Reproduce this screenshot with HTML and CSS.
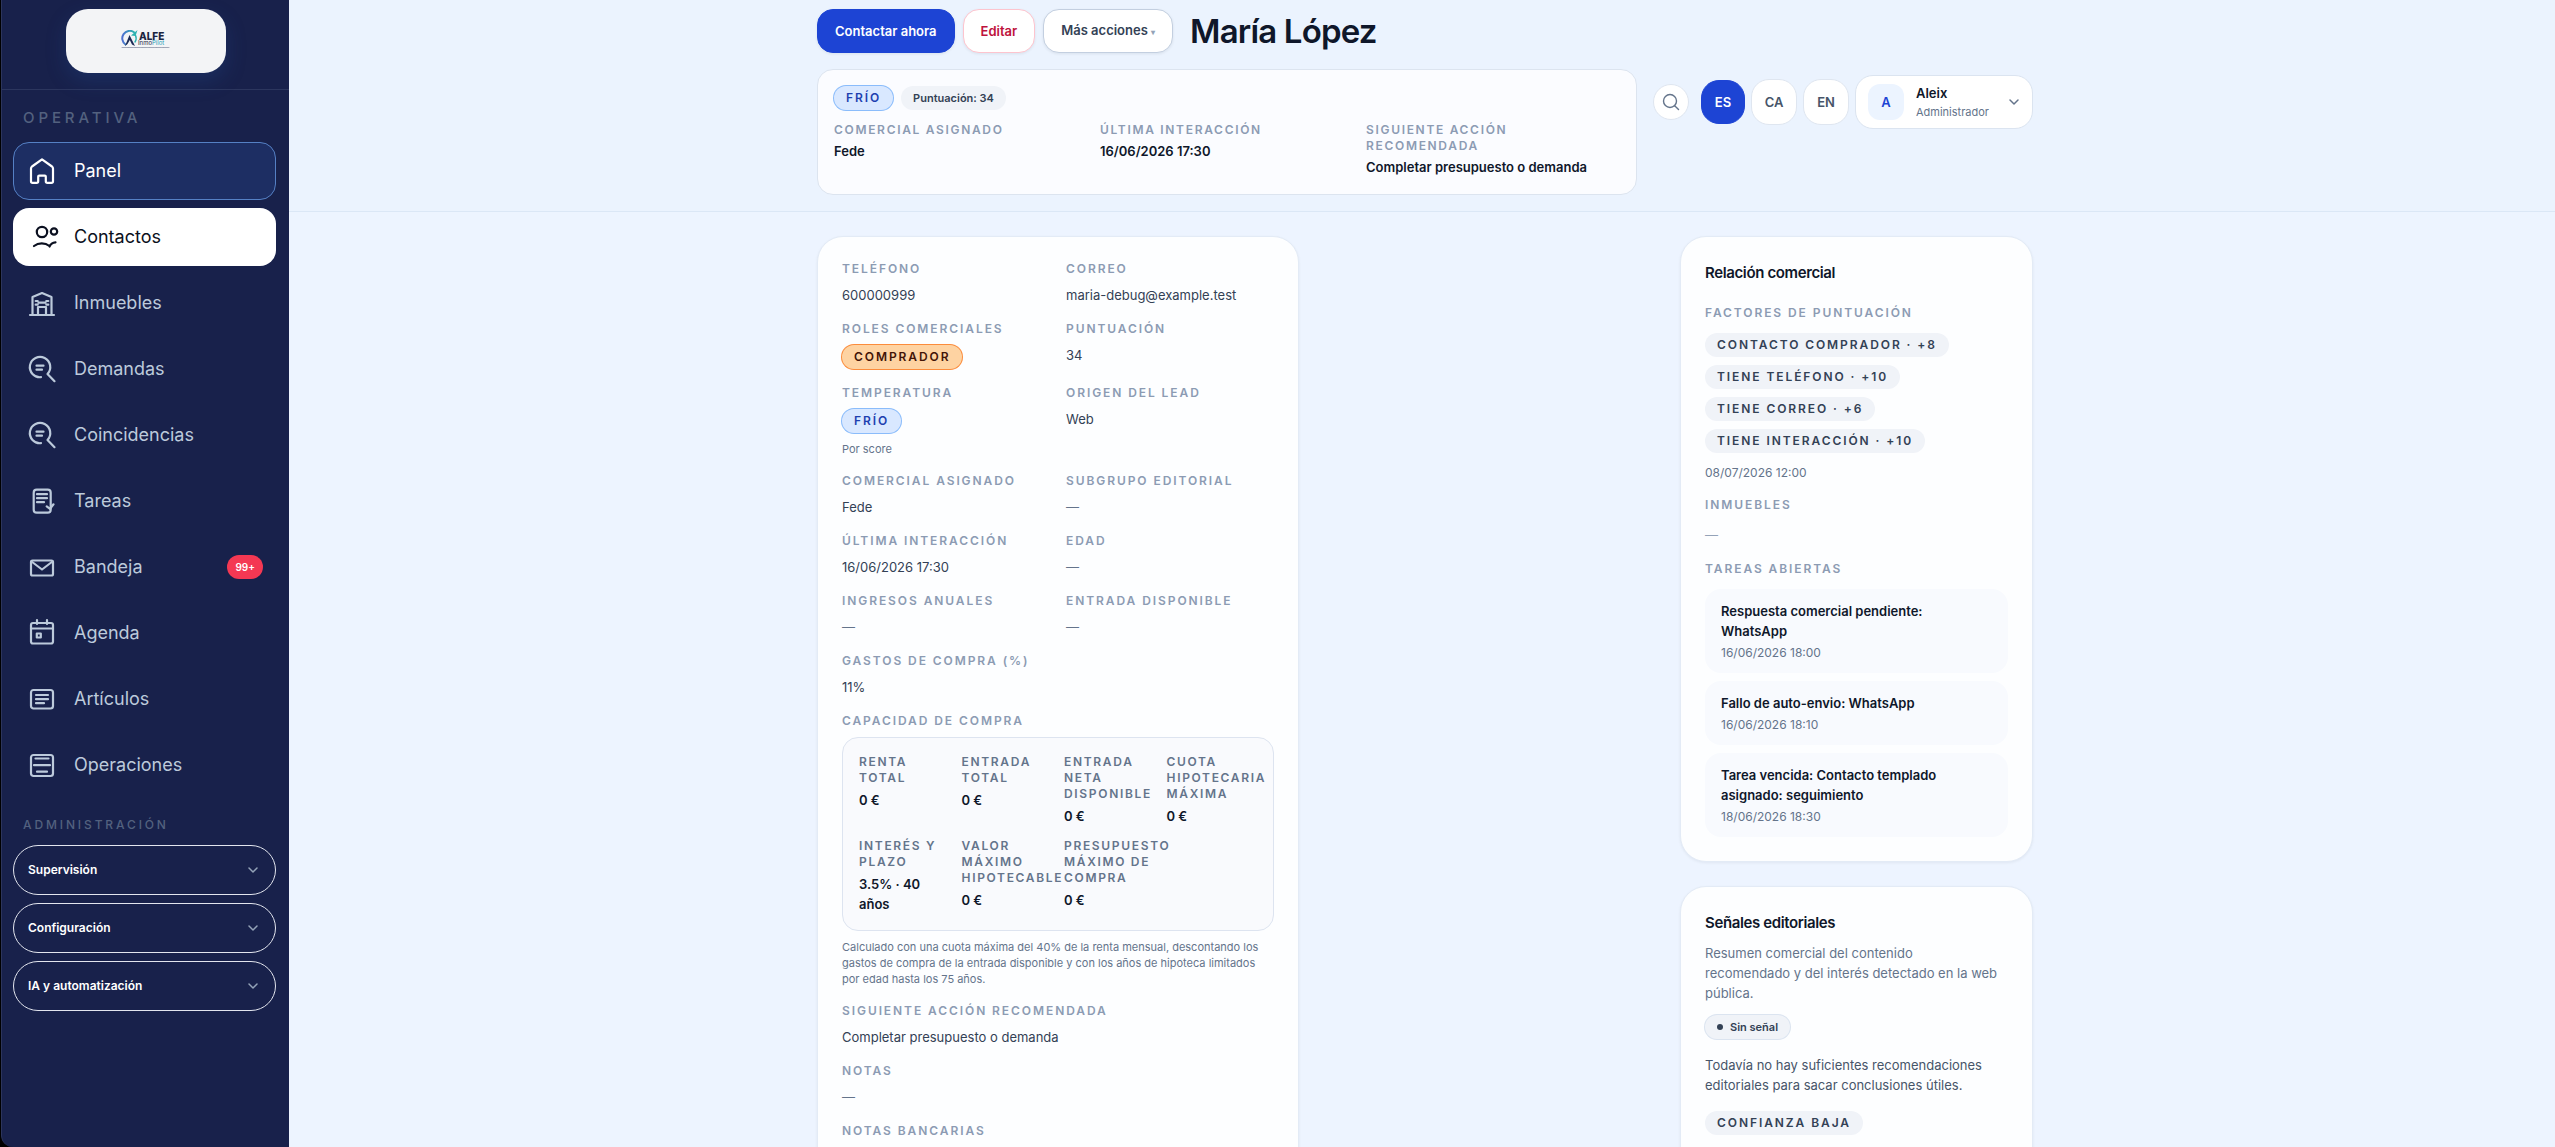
FILE: index.html
```html
<!DOCTYPE html>
<html lang="es">
<head>
    <meta charset="UTF-8">
    <meta name="viewport" content="width=device-width, initial-scale=1.0">
    <title>María López - Contactos</title>
    <link rel="stylesheet" href="styles.css">
</head>
<body>

<div class="app">
    <aside class="sidebar">
        <div class="brand">
            <a class="brand-box" href="#" aria-label="ALFE InmoPilot">
                <svg class="brand-logo" width="50" height="22" viewBox="0 0 50 22">
                    <defs>
                        <linearGradient id="ring" x1="0" y1="0" x2="1" y2="0">
                            <stop offset="0" stop-color="#4f6fd0"/>
                            <stop offset="1" stop-color="#2bb3b0"/>
                        </linearGradient>
                    </defs>
                    <path d="M4.5 14.5A7 7 0 1 1 13 2.2" fill="none" stroke="url(#ring)" stroke-width="2"/>
                    <path d="M14.6 5.5A7 7 0 0 1 14 12" fill="none" stroke="#2bb3b0" stroke-width="1.4"/>
                    <path d="M10 5.5 16.5 0 14.5 6z" fill="#2bb3b0"/>
                    <path d="M4 16 8.5 5 14 16 11 14.5 8.8 10 6.5 14z" fill="#1b2a55"/>
                    <text class="logo-name" x="18" y="9.5">ALFE</text>
                    <text class="logo-sub" x="17" y="15">Inmo<tspan class="logo-teal">Pilot</tspan></text>
                    <path d="M1 17.5h47" stroke="#8b93a7" stroke-width=".8" stroke-dasharray="4 .6 2 .4"/>
                </svg>
            </a>
        </div>

        <p class="nav-heading">Operativa</p>
        <nav class="nav">
            <a class="nav-item nav-item-home" href="#">
                <svg class="nav-icon" viewBox="0 0 28 28"><path d="M3 11.5c0-.8.4-1.5 1-2L14 2.3l10 7.2c.6.5 1 1.2 1 2v12.7c0 .9-.7 1.6-1.6 1.6h-4c-.9 0-1.6-.7-1.6-1.6v-4.6a1 1 0 0 0-1-1h-5.600a1 1 0 0 0-1 1v4.600c0 .9-.7 1.600-1.600 1.600h-4C3.700 25.800 3 25.100 3 24.200z"/></svg>
                <span>Panel</span>
            </a>
            <a class="nav-item nav-item-active" href="#" aria-current="page">
                <svg class="nav-icon" viewBox="0 0 28 28"><circle cx="14" cy="9" r="5.2"/><circle cx="26" cy="8.5" r="3.2"/><path d="M6 23c4.5-3.5 11-3.5 15.5 0M21.5 23.5c1-2.5 3-4 6-4.2"/></svg>
                <span>Contactos</span>
            </a>
            <a class="nav-item" href="#">
                <svg class="nav-icon" viewBox="0 0 28 28"><path d="M2 26h24M4.5 26V8L14 4l9.5 4v18M10 26v-8h8v8M10.5 13.7h7M7.7 12h2M7.7 15.7h2M18.3 12h2M18.3 15.7h2"/></svg>
                <span>Inmuebles</span>
            </a>
            <a class="nav-item" href="#">
                <svg class="nav-icon" viewBox="0 0 28 28"><path d="M13 22.2A10.2 10.2 0 1 1 19.5 19L26.5 26.2M8.5 10.7h7M8.5 14.7h5.5"/></svg>
                <span>Demandas</span>
            </a>
            <a class="nav-item" href="#">
                <svg class="nav-icon" viewBox="0 0 28 28"><path d="M13 22.2A10.2 10.2 0 1 1 19.5 19L26.5 26.2M8.5 10.7h7M8.5 14.7h5.5"/></svg>
                <span>Coincidencias</span>
            </a>
            <a class="nav-item" href="#">
                <svg class="nav-icon" viewBox="0 0 28 28"><rect x="5.7" y="2.7" width="17" height="23" rx="3"/><path d="M9 7.2h10M9 11.2h10M9 15.2h7M18.7 19.3l3.3 2.5 3.5-4.5"/></svg>
                <span>Tareas</span>
            </a>
            <a class="nav-item" href="#">
                <svg class="nav-icon" viewBox="0 0 28 28"><rect x="3" y="7.5" width="22" height="15" rx="1.5"/><path d="M3.5 8.5 14 16.5 24.5 8.5"/></svg>
                <span>Bandeja</span>
                <span class="nav-count">99+</span>
            </a>
            <a class="nav-item" href="#">
                <svg class="nav-icon" viewBox="0 0 28 28"><rect x="3" y="4" width="22" height="20.5" rx="2"/><path d="M3 9.5h22M9 1v4M19 1v4"/><rect x="8.8" y="14.5" width="4" height="4"/></svg>
                <span>Agenda</span>
            </a>
            <a class="nav-item" href="#">
                <svg class="nav-icon" viewBox="0 0 28 28"><rect x="3" y="5" width="22" height="18.5" rx="2.5"/><path d="M8 10h12M8 14.2h12M8 18.2h8"/></svg>
                <span>Artículos</span>
            </a>
            <a class="nav-item" href="#">
                <svg class="nav-icon" viewBox="0 0 28 28"><rect x="3" y="4" width="22" height="21" rx="2.5"/><path d="M7.5 7.5h13M6 14.2h16M9 20.7h10"/></svg>
                <span>Operaciones</span>
            </a>
        </nav>

        <p class="nav-heading nav-heading-small">Administración</p>
        <div class="nav">
            <button class="nav-group" type="button">Supervisión <svg class="chevron" viewBox="0 0 12 12"><path d="M2 4l4 4 4-4"/></svg></button>
            <button class="nav-group" type="button">Configuración <svg class="chevron" viewBox="0 0 12 12"><path d="M2 4l4 4 4-4"/></svg></button>
            <button class="nav-group" type="button">IA y automatización <svg class="chevron" viewBox="0 0 12 12"><path d="M2 4l4 4 4-4"/></svg></button>
        </div>
    </aside>

    <div class="main">
        <header class="header">
            <div class="container">
                <div class="title-row">
                    <div class="actions">
                        <button class="btn btn-primary" type="button">Contactar ahora</button>
                        <button class="btn btn-danger" type="button">Editar</button>
                        <button class="btn" type="button">Más acciones <span class="caret">▾</span></button>
                    </div>
                    <h1>María López</h1>
                </div>

                <div class="header-row">
                    <section class="summary">
                        <div class="summary-badges">
                            <span class="badge badge-blue">Frío</span>
                            <span class="score">Puntuación: 34</span>
                        </div>
                        <dl class="summary-grid">
                            <div>
                                <dt class="label">Comercial asignado</dt>
                                <dd>Fede</dd>
                            </div>
                            <div>
                                <dt class="label">Última interacción</dt>
                                <dd>16/06/2026 17:30</dd>
                            </div>
                            <div>
                                <dt class="label">Siguiente acción recomendada</dt>
                                <dd>Completar presupuesto o demanda</dd>
                            </div>
                        </dl>
                    </section>

                    <div class="tools">
                        <button class="search" type="button" aria-label="Buscar">
                            <svg viewBox="0 0 18 18"><circle cx="8" cy="8" r="6.5"/><path d="M12.7 12.7 16.5 16.5"/></svg>
                        </button>
                        <div class="langs">
                            <button class="lang lang-active" type="button">ES</button>
                            <button class="lang" type="button">CA</button>
                            <button class="lang" type="button">EN</button>
                            <button class="user" type="button">
                                <span class="avatar">A</span>
                                <span class="user-text">
                                    <strong>Aleix</strong>
                                    <small>Administrador</small>
                                </span>
                                <svg class="chevron" viewBox="0 0 12 12"><path d="M2 4l4 4 4-4"/></svg>
                            </button>
                        </div>
                    </div>
                </div>
            </div>
        </header>

        <main class="container columns">
            <section class="card">
                <dl class="details">
                    <div>
                        <dt class="label">Teléfono</dt>
                        <dd>600000999</dd>
                    </div>
                    <div>
                        <dt class="label">Correo</dt>
                        <dd>maria-debug@example.test</dd>
                    </div>
                    <div>
                        <dt class="label">Roles comerciales</dt>
                        <dd><span class="badge badge-orange">Comprador</span></dd>
                    </div>
                    <div>
                        <dt class="label">Puntuación</dt>
                        <dd>34</dd>
                    </div>
                    <div>
                        <dt class="label">Temperatura</dt>
                        <dd>
                            <span class="badge badge-blue">Frío</span>
                            <p class="hint">Por score</p>
                        </dd>
                    </div>
                    <div>
                        <dt class="label">Origen del lead</dt>
                        <dd>Web</dd>
                    </div>
                    <div>
                        <dt class="label">Comercial asignado</dt>
                        <dd>Fede</dd>
                    </div>
                    <div>
                        <dt class="label">Subgrupo editorial</dt>
                        <dd class="none">—</dd>
                    </div>
                    <div>
                        <dt class="label">Última interacción</dt>
                        <dd>16/06/2026 17:30</dd>
                    </div>
                    <div>
                        <dt class="label">Edad</dt>
                        <dd class="none">—</dd>
                    </div>
                    <div>
                        <dt class="label">Ingresos anuales</dt>
                        <dd class="none">—</dd>
                    </div>
                    <div>
                        <dt class="label">Entrada disponible</dt>
                        <dd class="none">—</dd>
                    </div>
                    <div class="wide">
                        <dt class="label">Gastos de compra (%)</dt>
                        <dd>11%</dd>
                    </div>
                    <div class="wide">
                        <dt class="label">Capacidad de compra</dt>
                        <dd>
                            <dl class="capacity">
                                <div>
                                    <dt class="label">Renta total</dt>
                                    <dd>0 €</dd>
                                </div>
                                <div>
                                    <dt class="label">Entrada total</dt>
                                    <dd>0 €</dd>
                                </div>
                                <div>
                                    <dt class="label">Entrada neta disponible</dt>
                                    <dd>0 €</dd>
                                </div>
                                <div>
                                    <dt class="label">Cuota hipotecaria máxima</dt>
                                    <dd>0 €</dd>
                                </div>
                                <div>
                                    <dt class="label">Interés y plazo</dt>
                                    <dd>3.5% · 40 años</dd>
                                </div>
                                <div>
                                    <dt class="label">Valor máximo hipotecable</dt>
                                    <dd>0 €</dd>
                                </div>
                                <div>
                                    <dt class="label">Presupuesto máximo de compra</dt>
                                    <dd>0 €</dd>
                                </div>
                            </dl>
                            <p class="hint">Calculado con una cuota máxima del 40% de la renta mensual, descontando los gastos de compra de la entrada disponible y con los años de hipoteca limitados por edad hasta los 75 años.</p>
                        </dd>
                    </div>
                    <div class="wide">
                        <dt class="label">Siguiente acción recomendada</dt>
                        <dd>Completar presupuesto o demanda</dd>
                    </div>
                    <div class="wide">
                        <dt class="label">Notas</dt>
                        <dd class="none">—</dd>
                    </div>
                    <div class="wide">
                        <dt class="label">Notas bancarias</dt>
                        <dd></dd>
                    </div>
                </dl>
            </section>

            <div class="side">
                <section class="card">
                    <h2>Relación comercial</h2>
                    <h3 class="label factors-label">Factores de puntuación</h3>
                    <ul class="factors">
                        <li class="badge">Contacto comprador · +8</li>
                        <li class="badge">Tiene teléfono · +10</li>
                        <li class="badge">Tiene correo · +6</li>
                        <li class="badge">Tiene interacción · +10</li>
                    </ul>
                    <p class="date">08/07/2026 12:00</p>
                    <h3 class="label">Inmuebles</h3>
                    <p class="empty">—</p>
                    <h3 class="label">Tareas abiertas</h3>
                    <ul class="tasks">
                        <li>
                            <strong>Respuesta comercial pendiente: WhatsApp</strong>
                            <span>16/06/2026 18:00</span>
                        </li>
                        <li>
                            <strong>Fallo de auto-envio: WhatsApp</strong>
                            <span>16/06/2026 18:10</span>
                        </li>
                        <li>
                            <strong>Tarea vencida: Contacto templado asignado: seguimiento</strong>
                            <span>18/06/2026 18:30</span>
                        </li>
                    </ul>
                </section>

                <section class="card">
                    <h2>Señales editoriales</h2>
                    <p class="intro">Resumen comercial del contenido<br> recomendado y del interés detectado en la web pública.</p>
                    <span class="signal">Sin señal</span>
                    <p class="signal-text">Todavía no hay suficientes recomendaciones editoriales para sacar conclusiones útiles.</p>
                    <span class="badge">Confianza baja</span>
                </section>
            </div>
        </main>
    </div>
</div>

</body>
</html>
```

FILE: styles.css
```css
* {
    box-sizing: border-box;
}

body {
    margin: 0;
    background: #000;
    color: #334155;
    font-family: "Inter", sans-serif;
    font-size: 13px;
    line-height: 20px;
}

h1, h2, h3, p, ul, dl, dd {
    margin: 0;
    padding: 0;
}

ul {
    list-style: none;
}

a {
    color: inherit;
    text-decoration: none;
}

button {
    font: inherit;
    color: inherit;
    cursor: pointer;
}

svg {
    flex: none;
    fill: none;
    stroke: currentColor;
    stroke-linecap: round;
    stroke-linejoin: round;
}

.app {
    display: flex;
    height: 100vh;
    overflow: hidden;
    padding-left: 1px;
}

/* Sidebar */
.sidebar {
    flex: none;
    width: 288px;
    background: #18214b;
    border-left: 1px solid #2c355c;
    border-bottom-left-radius: 12px;
    color: #bccadb;
}

.brand {
    display: flex;
    justify-content: center;
    padding: 9px 0 16px;
    border-bottom: 1px solid #2c365e;
}

.brand-box {
    display: flex;
    align-items: center;
    justify-content: center;
    width: 160px;
    height: 64px;
    border-radius: 22px;
    background: #f3f4f6;
    box-shadow: 0 8px 20px rgba(37, 84, 160, 0.25);
}

.brand-logo {
    stroke: none;
}

.logo-name {
    fill: #1b2440;
    font-size: 10px;
    font-weight: 800;
}

.logo-sub {
    fill: #1b2440;
    font-size: 6px;
}

.logo-teal {
    fill: #2a9fb8;
}

.nav-heading {
    padding: 16px 21px 12px;
    font-size: 15px;
    font-weight: 500;
    line-height: 24px;
    letter-spacing: 0.26em;
    text-transform: uppercase;
    color: #53617f;
}

.nav-heading-small {
    padding: 23px 21px 12px;
    font-size: 12px;
    line-height: 16px;
    letter-spacing: 0.24em;
}

.nav {
    display: flex;
    flex-direction: column;
    gap: 8px;
    padding: 0 13px 0 11px;
}

.nav-item {
    display: flex;
    align-items: center;
    gap: 18px;
    height: 58px;
    padding: 0 12px 0 14px;
    border: 1px solid transparent;
    border-radius: 16px;
    font-size: 18px;
    font-weight: 400;
}

.nav-icon {
    width: 28px;
    height: 28px;
    overflow: visible;
    stroke-width: 2.2;
}

.nav-item-home {
    background: #1d2e63;
    border-color: #5580c4;
    color: #fff;
}

.nav-item-active {
    background: #fff;
    color: #0b1020;
}

.nav-count {
    margin-left: auto;
    padding: 0 8px;
    border-radius: 12px;
    background: #f43853;
    color: #fff;
    font-size: 10px;
    font-weight: 600;
    line-height: 24px;
}

.nav-group {
    display: flex;
    align-items: center;
    justify-content: space-between;
    height: 50px;
    padding: 0 16px 0 14px;
    border: 1px solid #e2e5ee;
    border-radius: 25px;
    background: none;
    color: #fff;
    font-size: 12px;
    font-weight: 600;
}

.chevron {
    width: 12px;
    height: 12px;
    color: #94a3b8;
    stroke-width: 1.5;
}

/* Header */
.main {
    flex: 1;
    min-width: 0;
    background: #edf4ff;
}

.container {
    max-width: 1222px;
    margin: 0 auto;
    padding-left: 6px;
}

.header {
    padding: 9px 0 16px;
    background: #ebf3fe;
    border-bottom: 1px solid #dbe7f6;
}

.title-row {
    display: flex;
    align-items: center;
    gap: 17px;
    height: 44px;
}

.actions {
    display: flex;
    gap: 8px;
}

.btn {
    height: 44px;
    padding: 0 17px;
    border: 1px solid #c3cfe0;
    border-radius: 16px;
    background: #fff;
    color: #334155;
    font-weight: 600;
    box-shadow: 0 1px 3px rgba(15, 23, 42, 0.08);
}

.btn-primary {
    background: #1d44d4;
    border-color: #1d44d4;
    color: #fff;
}

.btn-danger {
    border-color: #fdc4ce;
    color: #be123c;
}

.caret {
    color: #94a3b8;
    font-size: 8px;
}

h1 {
    color: #0f172a;
    font-size: 33px;
    font-weight: 600;
    line-height: 44px;
    letter-spacing: -0.025em;
}

.header-row {
    display: flex;
    align-items: flex-start;
    gap: 16px;
    margin-top: 16px;
}

.summary {
    flex: 1;
    min-height: 126px;
    padding: 15px 16px;
    border: 1px solid #dce4ef;
    border-radius: 16px;
    background: #fbfcff;
}

.summary-badges {
    display: flex;
    align-items: center;
    gap: 8px;
    height: 26px;
}

.score {
    padding: 0 12px;
    border-radius: 12px;
    background: #f0f3f8;
    font-size: 11px;
    font-weight: 600;
    line-height: 24px;
}

.summary-grid {
    display: grid;
    grid-template-columns: repeat(3, minmax(0, 1fr));
    gap: 12px;
    margin-top: 11px;
}

.summary-grid dd {
    margin-top: 3px;
    color: #0f172a;
    font-weight: 600;
}

.label {
    color: #8c9bb3;
    font-size: 12px;
    font-weight: 600;
    line-height: 16px;
    letter-spacing: 0.16em;
    text-transform: uppercase;
}

.summary .label {
    letter-spacing: 0.14em;
}

.tools {
    display: flex;
    align-items: center;
    gap: 12px;
    margin-top: 6px;
}

.search {
    display: flex;
    align-items: center;
    justify-content: center;
    width: 36px;
    height: 36px;
    padding: 0;
    border: 1px solid #dfe6f0;
    border-radius: 18px;
    background: #fff;
    color: #64748b;
}

.search svg {
    width: 18px;
    height: 18px;
    stroke-width: 1.4;
}

.langs {
    display: flex;
    align-items: center;
    gap: 6px;
}

.lang {
    width: 46px;
    height: 46px;
    padding: 0;
    border: 1px solid #dfe6f0;
    border-radius: 18px;
    background: #fff;
    color: #475569;
    font-weight: 600;
}

.lang-active {
    width: 44px;
    height: 44px;
    border-color: #1d44d4;
    background: #1d44d4;
    color: #fff;
}

.user {
    display: flex;
    align-items: center;
    gap: 12px;
    height: 54px;
    width: 178px;
    padding: 0 12px;
    border: 1px solid #dbe4f0;
    border-radius: 18px;
    background: #fff;
    text-align: left;
}

.user .chevron {
    margin-left: auto;
    color: #64748b;
}

.avatar {
    width: 36px;
    border-radius: 12px;
    background: #ecf4ff;
    color: #1d44d4;
    font-weight: 600;
    line-height: 36px;
    text-align: center;
}

.user-text {
    display: flex;
    flex-direction: column;
}

.user-text strong {
    color: #0f172a;
    font-weight: 600;
}

.user-text small {
    color: #64748b;
    font-size: 11px;
    line-height: 18px;
}

/* Contact sheet */
.columns {
    display: flex;
    align-items: flex-start;
    justify-content: space-between;
    padding-top: 24px;
}

.columns > .card {
    width: 482px;
}

.side {
    display: flex;
    flex-direction: column;
    gap: 24px;
    width: 353px;
}

.card {
    padding: 24px;
    border: 1px solid #e3ebf6;
    border-radius: 26px;
    background: #fdfeff;
    box-shadow: 0 1px 3px rgba(15, 23, 42, 0.06);
}

.side .card:last-child {
    padding-bottom: 48px;
}

.details {
    display: grid;
    grid-template-columns: 1fr 1fr;
    gap: 16px;
}

.details > div > dd {
    min-height: 20px;
    margin-top: 8px;
}

.details .none {
    color: #64748b;
}

.wide {
    grid-column: 1 / -1;
}

.badge {
    display: block;
    width: fit-content;
    padding: 0 12px;
    border-radius: 12px;
    background: #f0f3f8;
    color: #334155;
    font-size: 12px;
    font-weight: 600;
    line-height: 24px;
    letter-spacing: 0.16em;
    text-transform: uppercase;
}

.badge-blue {
    background: #d9e8ff;
    box-shadow: 0 0 0 1px #8abcfb;
    color: #1e40af;
}

.badge-orange {
    background: #fed3a2;
    box-shadow: 0 0 0 1px #fb8c3c;
    color: #431407;
}

.hint {
    margin-top: 8px;
    color: #64748b;
    font-size: 11px;
    line-height: 16px;
}

.capacity {
    display: grid;
    grid-template-columns: repeat(4, minmax(0, 1fr));
    gap: 12px;
    padding: 16px;
    border: 1px solid #dde4f0;
    border-radius: 16px;
    background: #f9fafd;
}

.capacity .label {
    color: #64748b;
    letter-spacing: 0.14em;
}

.capacity dd {
    margin-top: 4px;
    color: #0f172a;
    font-weight: 600;
}

h2 {
    color: #0f172a;
    font-size: 15px;
    font-weight: 600;
    line-height: 24px;
    letter-spacing: -0.025em;
}

.factors-label {
    margin: 20px 0 12px;
}

.factors,
.tasks {
    display: flex;
    flex-direction: column;
    gap: 8px;
}

.date {
    margin: 12px 0 16px;
    color: #64748b;
    font-size: 12px;
    line-height: 16px;
}

.empty {
    margin: 12px 0 16px;
    color: #94a3b8;
}

.tasks {
    margin-top: 12px;
}

.tasks li {
    display: flex;
    flex-direction: column;
    gap: 4px;
    padding: 12px 24px 12px 16px;
    border-radius: 16px;
    background: #f8fafe;
}

.tasks strong {
    color: #0f172a;
    font-weight: 600;
}

.tasks span {
    color: #64748b;
    font-size: 12px;
    line-height: 16px;
}

.intro {
    margin-top: 8px;
    color: #64748b;
}

.signal {
    display: flex;
    align-items: center;
    gap: 7px;
    width: fit-content;
    margin: 12px 0 16px;
    padding: 0 12px;
    border-radius: 12px;
    background: #f0f3f8;
    box-shadow: 0 0 0 1px #dbe4f0;
    font-size: 11px;
    font-weight: 600;
    line-height: 24px;
}

.signal::before {
    content: "";
    width: 6px;
    height: 6px;
    border-radius: 50%;
    background: #334155;
}

.signal-text {
    margin-bottom: 16px;
    color: #475569;
}
```
